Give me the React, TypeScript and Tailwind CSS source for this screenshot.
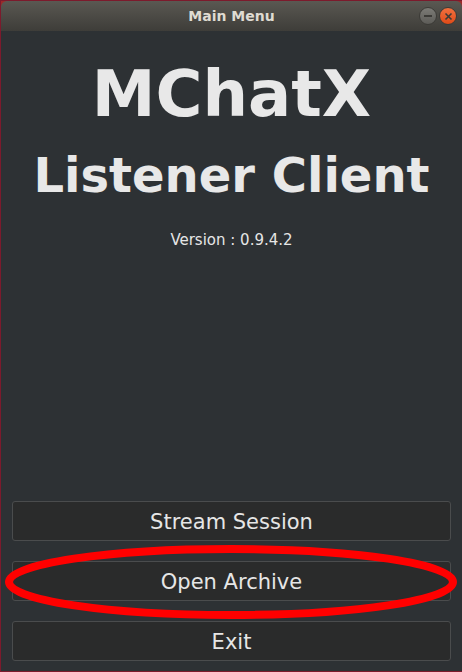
import React from 'react';

const font = { fontFamily: '"DejaVu Sans", "Noto Sans", sans-serif' };

const MenuButton: React.FC<{ label: string }> = ({ label }) => (
    <button className="h-[40px] w-full pt-[3px] rounded-[3px] border border-[#4a4c4d] bg-[#2a2b2b] text-[21px] text-[#e6e6e6]">
        {label}
    </button>
);

const App: React.FC = () => {
    return (
        <div className="relative w-[462px] h-[672px] bg-[#9b2a2a] overflow-hidden" style={font}>
            <div className="absolute inset-0 border-l border-t border-b border-[#7c1a2c] pointer-events-none" />
            <div className="flex flex-col w-full h-full pl-[1px] pt-[1px] pb-[1px]">
                {/* title bar */}
                <div className="relative h-[30px] rounded-t-[6px] bg-gradient-to-b from-[#5a5852] to-[#3e3d39] flex items-center justify-center">
                    <span className="text-[14px] font-bold text-[#dfdbd2]">Main Menu</span>
                    <div className="absolute right-[5px] top-[6px] flex gap-[2px]">
                        <div className="w-[18px] h-[18px] rounded-full bg-gradient-to-b from-[#7c7b76] to-[#5d5c58] border border-[#3c3b37] flex items-center justify-center">
                            <div className="w-[8px] h-[2px] bg-[#3c3b37]" />
                        </div>
                        <div className="w-[18px] h-[18px] rounded-full bg-gradient-to-b from-[#f2703e] to-[#df4a16] border border-[#3c3b37] flex items-center justify-center">
                            <svg width="9" height="9" viewBox="0 0 9 9">
                                <path d="M1.5 1.5 L7.5 7.5 M7.5 1.5 L1.5 7.5" stroke="#3c3b37" strokeWidth="1.6" />
                            </svg>
                        </div>
                    </div>
                </div>
                {/* body */}
                <div className="flex-1 bg-[#2d3134] flex flex-col items-center px-[11px] pb-[10px]">
                    <h1 className="mt-[25px] text-[64px] leading-[76px] font-bold text-[#e8e8e8]">MChatX</h1>
                    <h2 className="mt-[15px] text-[48px] leading-[56px] font-bold text-[#e8e8e8]">Listener Client</h2>
                    <p className="mt-[26px] text-[15px] text-[#e6e6e6]">Version : 0.9.4.2</p>
                    <div className="mt-auto w-full flex flex-col gap-[20px]">
                        <MenuButton label="Stream Session" />
                        <MenuButton label="Open Archive" />
                        <MenuButton label="Exit" />
                    </div>
                </div>
            </div>
            {/* highlight ring */}
            <svg className="absolute left-0 top-0 pointer-events-none" width="462" height="672">
                <ellipse cx="231" cy="582" rx="222" ry="33" fill="none" stroke="#ff0000" strokeWidth="8" />
            </svg>
        </div>
    );
};

export default App;
